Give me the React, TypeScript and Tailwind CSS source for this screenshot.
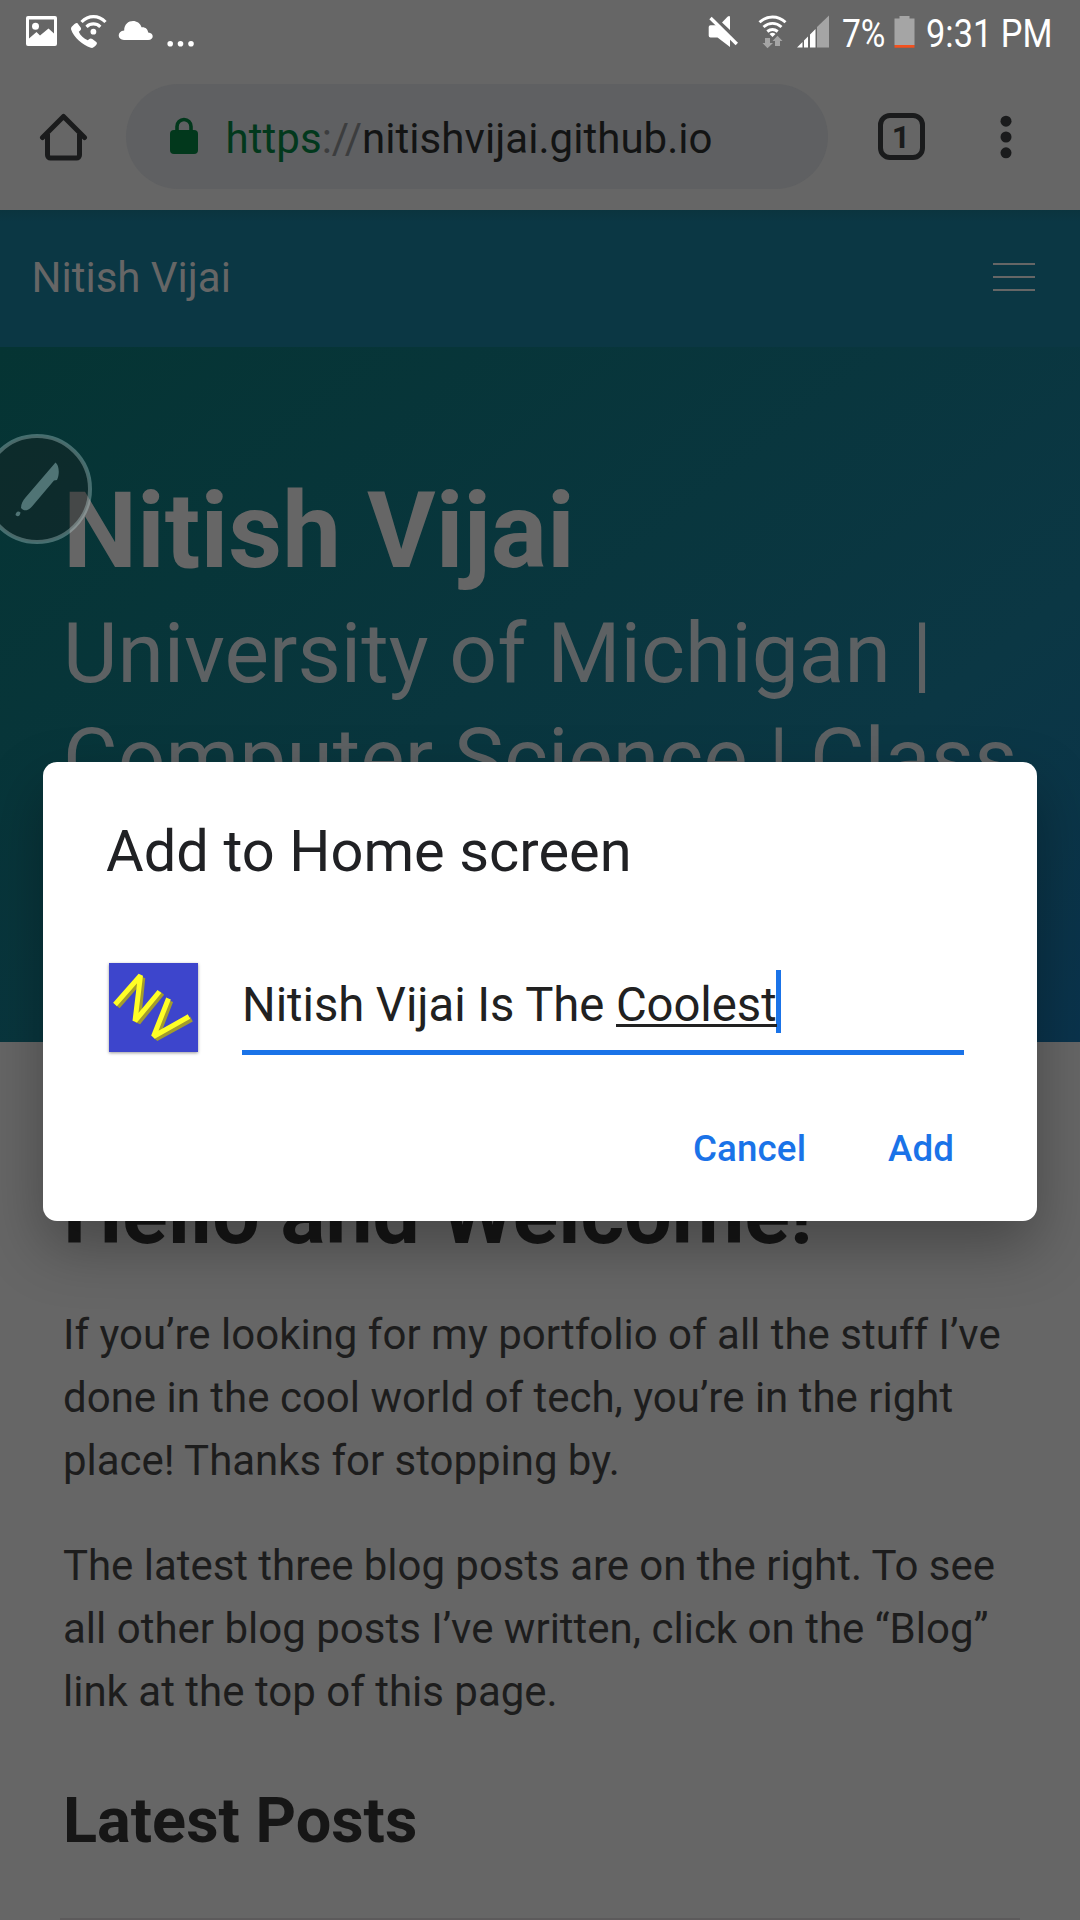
import React from "react";

function StatusBar() {
  return (
    <div className="flex h-[63px] items-start text-white">
      <svg className="h-[63px] w-[210px]" viewBox="0 0 210 63" fill="currentColor">
        <path fillRule="evenodd" d="M28 16h27a2 2 0 0 1 2 2v26a2 2 0 0 1-2 2H28a2 2 0 0 1-2-2V18a2 2 0 0 1 2-2Zm1 3.500v19l7.500-6.500 3.500 3.500 8.500-7 5.500 5V19.500Z" />
        <circle cx="35.500" cy="26.300" r="3.500" />
        <path d="M74 24.500c1-1 2.500-2 3.500-1.200l3.200 4.200c.8 1.200.4 2.300-.7 3.200l-1.200 1c1.500 3.600 5 7 9 8.500l1.500-1.200c1-.8 2-.7 3 0l4 3c1 .9.700 2-.2 3-1.800 2-3.200 3.300-5.300 2.800-8.500-2.800-17-10.600-19.700-18.300-.6-2 1.200-3.500 2.900-5Z" />
        <circle cx="93.400" cy="31.700" r="2.900" />
        <path d="M81.500 22c7-7.200 17-7.200 24 0M86.500 26.800c4-3.800 9.800-3.800 13.800 0" fill="none" stroke="currentColor" strokeWidth="3.200" />
        <path d="M124 40c-6.800 0-7.300-9 .2-9.500-.3-11.600 14.700-12.600 17.300-3.300 4-.4 6.300 1.900 6.700 5.300 6 .2 6 7.500 0 7.500Z" />
        <circle cx="170.200" cy="43.700" r="2.800" />
        <circle cx="180.500" cy="43.700" r="2.800" />
        <circle cx="191" cy="43.700" r="2.800" />
      </svg>
      <svg className="ml-[490px] h-[63px] w-[140px] shrink-0" viewBox="700 0 140 63" fill="currentColor">
        <path d="M710.500 25.300h5.500l14 13.700v8l-12.500-9.500h-7a1.800 1.800 0 0 1-1.800-1.800v-8.600a1.800 1.800 0 0 1 1.800-1.800ZM722 22.500l5.500-5.800q2.500-1.500 2.500.8v12.500Z" />
        <path d="m710.500 18 26.300 26" stroke="currentColor" strokeWidth="3.400" />
        <path d="M759.500 22.300c7.500-7 18.500-7 26 0M763.500 27c5.500-4.800 12.500-4.800 18 0M767.300 31.500c3.200-2.600 7.200-2.600 10.400 0" fill="none" stroke="currentColor" strokeWidth="2.900" />
        <path d="M769.500 34q3-2.500 6 0l-3 3Z" />
        <path d="M765 38h5v5h3l-5.500 5.200L762.500 43h2.500ZM775 46v-5h-2.500l5-5.200 5 5.200H780v5Z" fill="#a5a5a5" />
        <path d="M797 47.500 802.500 42v5.500ZM804 40.500l4-4v11h-4ZM810 34.500l5.500-5.500v18.500H810Z" />
        <path d="M817 27 829 15.500v32h-12Z" fill="#a5a5a5" />
      </svg>
      <span className="mt-[10px] ml-[1.500px] w-[51px] shrink-0 origin-left scale-x-[.85] text-[39.500px] leading-[47px] whitespace-nowrap">7%</span>
      <svg className="mt-[15px] ml-[1px] h-[33px] w-[21px] shrink-0" viewBox="0 0 21 33">
        <path d="M5.500 1h10v2.500H20.500V30H.5V3.500h5Z" fill="#a5a5a5" />
        <path d="M.5 30h20v2.700H.5Z" fill="#f4511e" />
      </svg>
      <span className="mt-[10px] ml-[11px] origin-left scale-x-[.87] text-[39.500px] leading-[47px] whitespace-nowrap">9:31 PM</span>
    </div>
  );
}

function BrowserBar() {
  return (
    <div className="flex h-[147px] items-center text-[#1a1b1c]">
      <svg className="ml-[39px] h-[50px] w-[50px]" viewBox="0 0 50 50" fill="none" stroke="currentColor" strokeWidth="5" strokeLinecap="round" strokeLinejoin="round">
        <path d="M3.500 25.500 24.500 4.500 45.500 25.500" />
        <path d="M8.500 22v21a3 3 0 0 0 3 3h26a3 3 0 0 0 3-3V22" strokeLinecap="butt" />
      </svg>
      <div className="ml-[37px] flex h-[105px] w-[702px] items-center rounded-full bg-[#5f6062] pl-[43px]">
        <svg className="-mt-[2px] h-[38px] w-[30px]" viewBox="0 0 30 38" fill="#02381c">
          <rect x="1" y="13" width="28" height="24" rx="4" />
          <path d="M8 16V9.500a7 7 0 0 1 14 0V16" fill="none" stroke="#02381c" strokeWidth="3.600" />
        </svg>
        <span className="mt-[4px] ml-[26.500px] text-[42px] leading-[50px] tracking-[.05px] whitespace-nowrap">
          <span className="text-[#02381c]">https</span>
          <span className="text-[#3c3d3e]">://</span>
          <span className="text-[#131414]">nitishvijai.github.io</span>
        </span>
      </div>
      <div className="ml-[50px] flex h-[47px] w-[47px] items-center justify-center rounded-[12px] border-5 border-[#1a1b1c] pr-px text-[32px] leading-none font-bold">1</div>
      <svg className="ml-[75px] h-[44px] w-[12px]" viewBox="0 0 12 44" fill="currentColor">
        <circle cx="6" cy="6.200" r="5.500" />
        <circle cx="6" cy="22" r="5.500" />
        <circle cx="6" cy="37.800" r="5.500" />
      </svg>
    </div>
  );
}

function Site() {
  return (
    <div>
      <nav className="flex h-[137px] items-center justify-between bg-[linear-gradient(#0b343e,#0b3744_12px)] pr-[45px] pb-[3px] pl-[31.500px]">
        <span className="text-[42px] leading-[63px] text-[#666]">Nitish Vijai</span>
        <span className="flex flex-col gap-[11px]">
          <span className="h-[2px] w-[42px] bg-[#666]" />
          <span className="h-[2px] w-[42px] bg-[#666]" />
          <span className="h-[2px] w-[42px] bg-[#666]" />
        </span>
      </nav>
      <header className="h-[695px] bg-[linear-gradient(141deg,#053433_0%,#0b3744_71%,#0a334c_100%)] px-[63px] pt-[126px]">
        <h1 className="text-[105px] leading-[118px] font-bold text-[#666]">Nitish Vijai</h1>
        <p className="mt-[10px] text-[84px] leading-[105px] whitespace-nowrap text-[#5d6163]">
          University of Michigan |<br />Computer Science | Class
        </p>
      </header>
      <main className="px-[63px] pt-[126px] text-[42px] leading-[63px] text-[#1d1d1d]">
        <h2 className="text-[84px] leading-[94px] font-bold text-[#161616]">Hello and Welcome!</h2>
        <p className="mt-[41px] whitespace-nowrap">
          If you’re looking for my portfolio of all the stuff I’ve<br />
          done in the cool world of tech, you’re in the right<br />
          <span className="tracking-[-.03px]">place! Thanks for stopping by.</span>
        </p>
        <p className="mt-[42px] whitespace-nowrap">
          <span className="tracking-[-.04px]">The latest three blog posts are on the right. To see</span><br />
          all other blog posts I’ve written, click on the “Blog”<br />
          link at the top of this page.
        </p>
        <h3 className="mt-[62px] text-[63px] leading-[71px] font-bold text-[#161616]">Latest Posts</h3>
        <div className="-mx-[3px] mt-[62px] h-[60px] bg-[#5c5a5b]" />
      </main>
    </div>
  );
}

function PenBubble() {
  return (
    <svg className="absolute top-[433px] left-0 h-[112px] w-[92px]" viewBox="0 0 92 112">
      <circle cx="37" cy="56" r="53" fill="#191f20" fillOpacity=".42" stroke="#c8e6e6" strokeOpacity=".33" strokeWidth="4" />
      <path d="M55.500 29.500c3.500 2.500 4.500 11 1.500 17.500l-3 .5-22 26c-4 4.500-8 5-11 1.500 0-4.500 2-7.500 4.500-10.500Z" fill="#507475" />
      <path d="M15.500 82c.5-3 2.500-4.500 5-2.500-.5 3.500-2.500 5-5 2.500Z" fill="#507475" />
    </svg>
  );
}

function AppIcon() {
  return (
    <svg className="h-[89px] w-[89px] bg-[#3d45cc] shadow-[0_1px_3px_rgba(0,0,0,.4)]" viewBox="0 0 89 89" fill="none" strokeLinejoin="bevel">
      <path d="M8.500 43.500 33.500 15 29 59.500 53 30M61.500 38 47 75.500 82.500 56" stroke="#a39c2c" strokeWidth="5.500" />
      <path d="M6 41.500 31.500 12.500 26 58 50.500 28.500M59.500 35.500 44.500 73.500 80 53.500" stroke="#ffff25" strokeWidth="5" />
    </svg>
  );
}

function Dialog() {
  return (
    <div className="absolute top-[762px] left-[43px] h-[459px] w-[994px] rounded-[14px] bg-white shadow-[0_26px_60px_rgba(0,0,0,.3)]">
      <h2 className="pt-[55px] pl-[63px] text-[57.750px] leading-[68px] tracking-[.06px] text-[#202124]">Add to Home screen</h2>
      <div className="mt-[78px] ml-[66px] flex">
        <AppIcon />
        <div className="relative -mt-[3px] ml-[44px] h-[95px] w-[722px] border-b-5 border-[#1a73e8] pt-[10px] text-[47.250px] leading-[63px] tracking-[-.06px] whitespace-nowrap text-[#212121]">
          <div className="flex">
            <span className="mt-[4px] whitespace-pre">Nitish Vijai Is The </span>
            <span className="relative mt-[4px]">
              Coolest
              <span className="absolute top-[50px] left-0 h-[3px] w-full bg-[#212121]" />
            </span>
            <span className="-ml-px h-[63px] w-[5px] bg-[#1a73e8]" />
          </div>
        </div>
      </div>
      <div className="mt-[72px] flex text-[36.750px] leading-[44px] font-medium tracking-[.1px] text-[#1a73e8]">
        <span className="ml-[650px] w-[195px]">Cancel</span>
        <span>Add</span>
      </div>
    </div>
  );
}

export default function App() {
  return (
    <div className="relative h-[1920px] w-[1080px] overflow-hidden bg-[#666] font-[Roboto,sans-serif]">
      <StatusBar />
      <BrowserBar />
      <Site />
      <PenBubble />
      <Dialog />
    </div>
  );
}
